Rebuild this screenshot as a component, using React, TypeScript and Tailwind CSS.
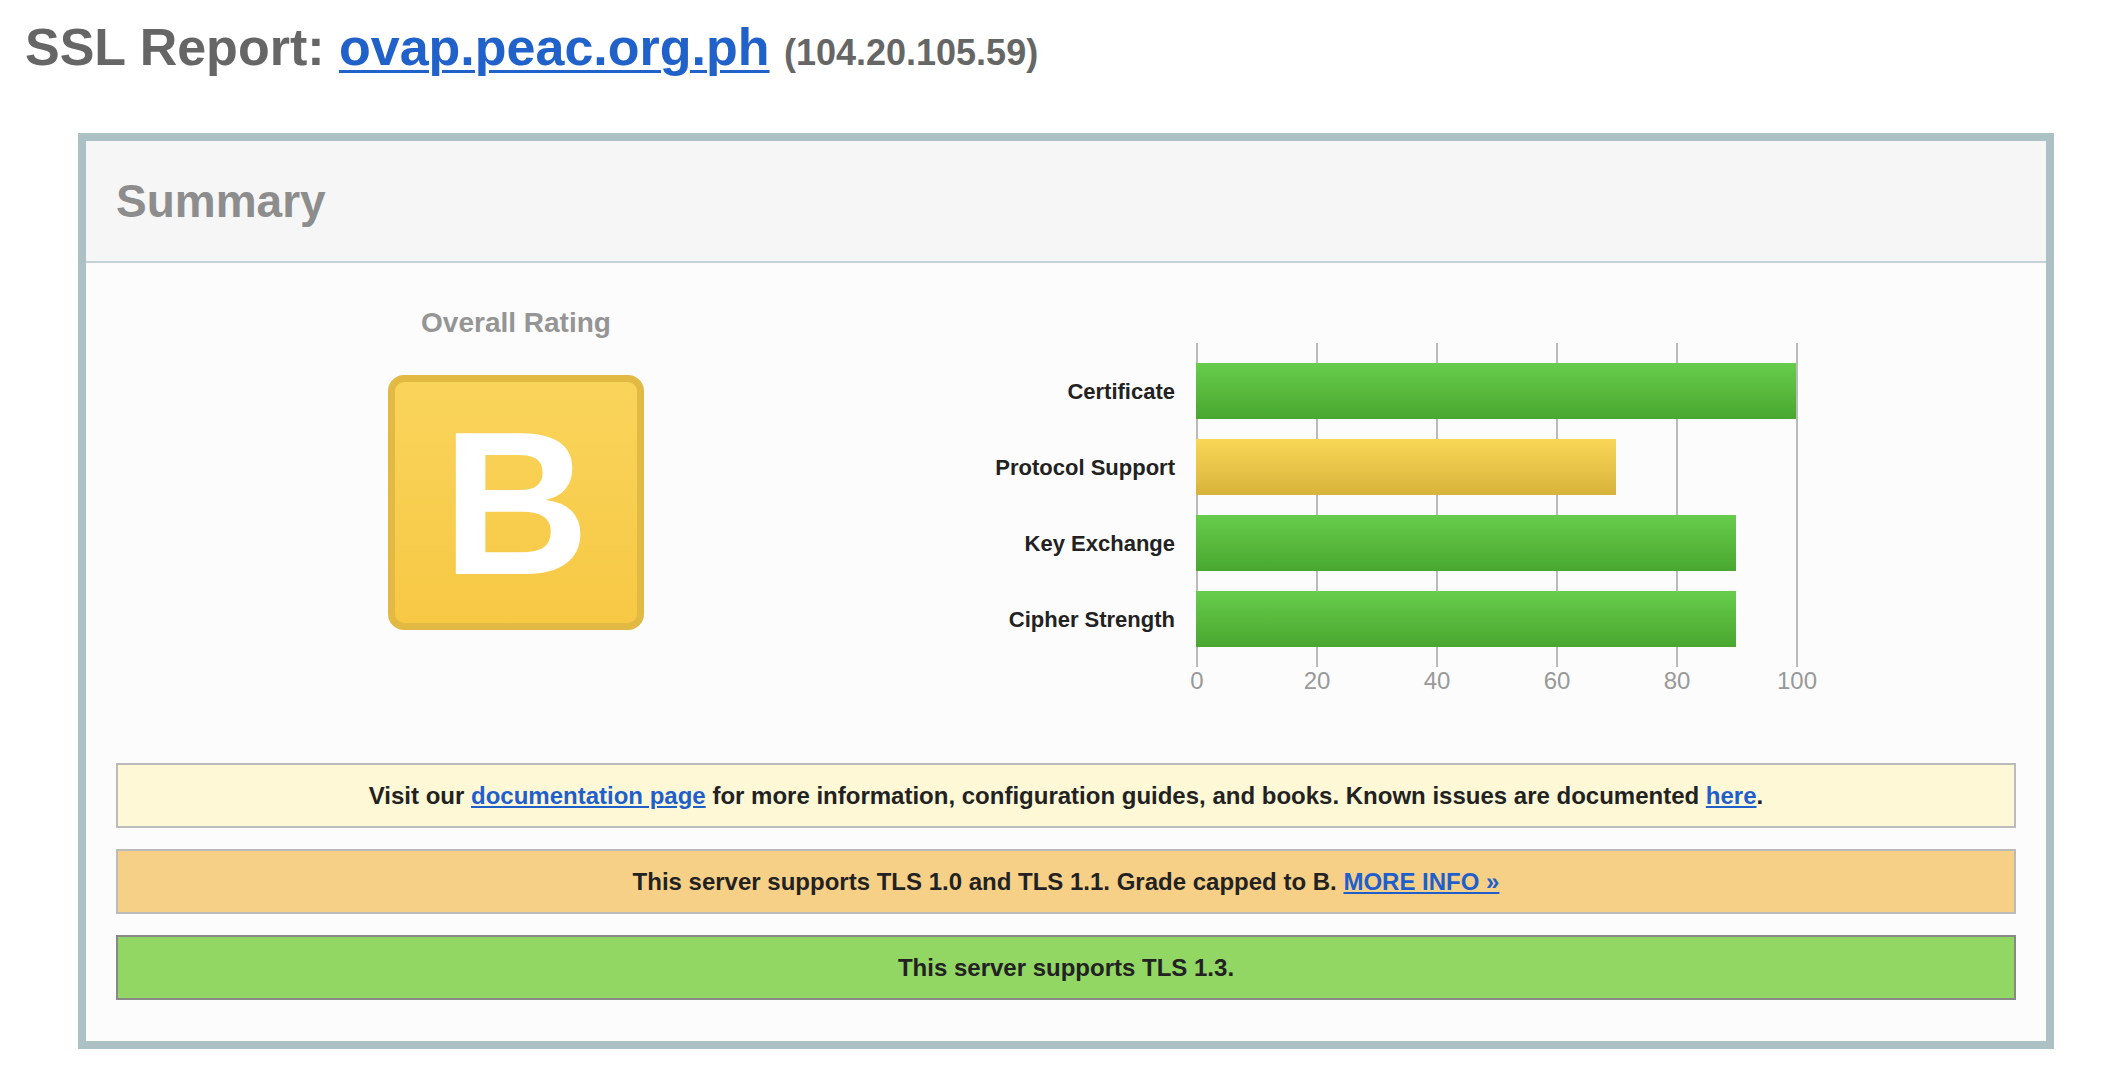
const bars = [
  { label: "Certificate", value: 100, tone: "green" },
  { label: "Protocol Support", value: 70, tone: "yellow" },
  { label: "Key Exchange", value: 90, tone: "green" },
  { label: "Cipher Strength", value: 90, tone: "green" },
];

const ticks = [0, 20, 40, 60, 80, 100];

function ScoreChart() {
  return (
    <div className="flex">
      {/* row labels */}
      <div className="w-[280px] pr-[21px] pt-[20px] flex flex-col gap-[20px]">
        {bars.map((b) => (
          <div
            key={b.label}
            className="h-[56px] flex items-center justify-end text-[22px] font-bold text-[#222]"
          >
            {b.label}
          </div>
        ))}
      </div>

      <div className="w-[600px]">
        <div className="relative py-[20px] flex flex-col gap-[20px]">
          {ticks.map((t) => (
            <div
              key={t}
              className="absolute top-0 bottom-0 w-[2px] bg-[#bababa]"
              style={{ left: t * 6 }}
            />
          ))}
          {bars.map((b) => (
            <div
              key={b.label}
              className={
                b.tone === "green"
                  ? "relative z-10 h-[56px] bg-linear-to-b from-[#67cc4b] to-[#49a72f]"
                  : "relative z-10 h-[56px] bg-linear-to-b from-[#f9d756] to-[#d8b33b]"
              }
              style={{ width: b.value * 6 }}
            />
          ))}
        </div>
        <div className="relative h-[28px]">
          {ticks.map((t) => (
            <span
              key={t}
              className="absolute top-0 -translate-x-1/2 text-[24px] leading-[28px] text-[#999]"
              style={{ left: t * 6 + 1 }}
            >
              {t}
            </span>
          ))}
        </div>
      </div>
    </div>
  );
}

function Notice({ className, children }: { className: string; children: React.ReactNode }) {
  return (
    <div
      className={
        "h-[65px] border-2 flex items-center justify-center text-[24px] font-bold text-[#222] " +
        className
      }
    >
      <div>{children}</div>
    </div>
  );
}

export default function App() {
  return (
    <div className="min-h-screen bg-white font-['Liberation_Sans',Arial,sans-serif]">
      <h1 className="pl-[25px] pt-[18px] text-[52px] leading-[58px] font-bold text-[#666]">
        SSL Report:{" "}
        <a
          href="#"
          className="text-[#2161ca] underline decoration-[3px] underline-offset-[5px]"
        >
          ovap.peac.org.ph
        </a>{" "}
        <span className="text-[36px]">(104.20.105.59)</span>
      </h1>

      <div className="ml-[78px] mt-[51px] w-[1976px] border-[8px] border-[#abc1c4]">
        <div className="h-[122px] bg-[#f6f6f6] border-b-2 border-[#c6d3d6] flex items-center pl-[30px]">
          <h2 className="text-[46px] font-bold text-[#8d8d8d]">Summary</h2>
        </div>

        <div className="bg-[#fcfcfc] px-[30px] pt-[44px] pb-[41px]">
          <div className="flex items-start">
            <div className="w-[800px] flex flex-col items-center">
              <div className="text-[28px] leading-[31px] font-bold text-[#959595]">
                Overall Rating
              </div>
              <div className="mt-[37px] w-[256px] h-[255px] rounded-[16px] border-[7px] border-[#e2b943] bg-linear-to-b from-[#f9d45a] to-[#f7c844] flex items-center justify-center">
                <span className="text-[204px] leading-none font-bold text-white">B</span>
              </div>
            </div>
            <div className="mt-[36px]">
              <ScoreChart />
            </div>
          </div>

          <div className="mt-[68px] flex flex-col gap-[21px]">
            <Notice className="bg-[#fff8d6] border-[#bbbbbb]">
              Visit our{" "}
              <a href="#" className="text-[#1f5fcc] underline">
                documentation page
              </a>{" "}
              for more information, configuration guides, and books. Known issues are documented{" "}
              <a href="#" className="text-[#1f5fcc] underline">
                here
              </a>
              .
            </Notice>
            <Notice className="bg-[#f7d087] border-[#bbbbbb]">
              This server supports TLS 1.0 and TLS 1.1. Grade capped to B.{" "}
              <a href="#" className="text-[#1f5fcc] underline">
                MORE INFO »
              </a>
            </Notice>
            <Notice className="bg-[#92d663] border-[#888888]">
              This server supports TLS 1.3.
            </Notice>
          </div>
        </div>
      </div>
    </div>
  );
}
